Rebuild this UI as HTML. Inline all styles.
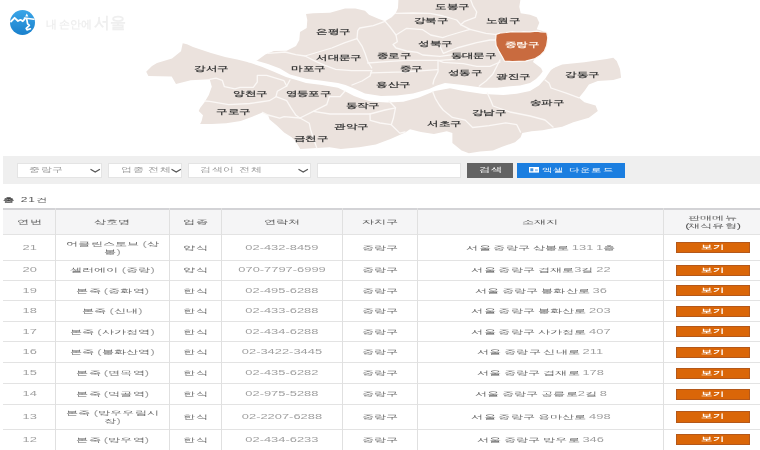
<!DOCTYPE html>
<html><head><meta charset="utf-8">
<style>
html,body{margin:0;padding:0;background:#fff;}
body{width:760px;height:450px;overflow:hidden;position:relative;font-family:"Liberation Sans",sans-serif;filter:blur(0.35px);}
.map{position:absolute;left:0;top:0;}
.map text{font-family:"Liberation Sans",sans-serif;font-size:7.2px;text-anchor:middle;dominant-baseline:central;letter-spacing:0.3px;font-weight:bold;}
.logo{position:absolute;left:9.8px;top:9.7px;width:25px;height:25px;border-radius:50%;background:linear-gradient(#3aa6e8,#1a80cc);}
.logotxt{position:absolute;left:46px;top:12px;height:22px;line-height:22px;font-weight:bold;color:#efefef;white-space:nowrap;}
.bar{position:absolute;left:3px;top:156px;width:757px;height:27.5px;background:#efefef;}
.sel{position:absolute;top:163px;height:14.5px;box-sizing:border-box;border:1px solid #e4e4e4;background:#fff;font-size:7px;color:#999;}
.sel span{position:absolute;top:-1px;line-height:14.5px;color:#9a9a9a;}
.chev{position:absolute;top:3.8px;margin-left:-1px;}
.b1{position:absolute;top:163px;height:14.7px;color:#fff;text-align:center;line-height:14.7px;font-size:7px;}
.total{position:absolute;left:3px;top:194px;height:12px;line-height:12px;color:#555;font-size:7.5px;}
.hbg{position:absolute;background:#f5f5f6;}
.hl{position:absolute;height:1px;background:#e3e3e3;}
.hl.top{height:2px;background:#d3d3d6;}
.vl{position:absolute;width:1px;background:#e0e0e0;}
.td,.th{position:absolute;display:flex;align-items:center;justify-content:center;text-align:center;font-size:7px;line-height:8.5px;}
.td span,.th span{display:inline-block;font-size:7.5px;letter-spacing:0px;color:#7c7c7c;line-height:9.4px;transform:translate(0.6px,0.7px) scale(1.55,0.85);}
.tx{display:inline-block;transform:scaleX(1.6);transform-origin:0 50%;font-size:7px;letter-spacing:0.5px;}
.th span{color:#555;font-weight:normal;letter-spacing:-0.9px;transform:translate(0.6px,-0.4px) scale(1.72,0.85);}
.td span{font-weight:normal;color:#666;letter-spacing:-0.9px;word-spacing:0.6px;transform:translate(0.6px,0.7px) scale(1.72,0.85);}
.addr span{word-spacing:0.3px;}
.td i{font-style:normal;font-weight:normal;color:#a0a0a0;letter-spacing:0px;}
.btn{position:absolute;width:74px;height:11.4px;box-sizing:border-box;border:1px solid #b4581a;background:#da6608;color:#fff;text-align:center;line-height:9.4px;font-size:7px;}
.btn span{display:inline-block;transform:translate(-1px,-0.3px) scale(1.6,0.85);font-size:7px;font-weight:bold;letter-spacing:0.5px;}
</style></head><body>
<svg class="map" width="760" height="156" viewBox="0 0 760 156">
<polygon points="146.2,71.8 152,66 157,62.9 172,58.4 181,51.3 182.7,43.3 187,44.2 193,46.9 211,53 225,57 237.2,59.4 249.4,62.5 256.8,60.7 265.3,54.6 273.9,50.9 286.7,50.7 296,46 299.3,40 300,32 306.7,28 307.3,20 306,14 313.3,13.3 330,12.7 345,8.4 355.4,8.4 365,10.7 369,14.7 378.3,18.7 385,21.3 391.7,17.3 395.7,13.3 398,8 398.5,-2 520.7,-2 519.3,6.7 520.7,13.3 530,14.7 536.7,17.3 539.3,22.7 536.7,29.3 546.7,32.2 547.8,37.8 546.7,45.6 544.4,51.1 540,55.6 534.4,58.9 533,62 541,68 543.5,73 547,72 551.1,68.9 562.2,64.4 584.4,62.2 606.7,58.9 613.3,57.8 616.7,61.1 620,68.9 621.1,77.8 613.3,80 597.8,81.1 588.9,84.4 584.4,91.1 578.9,97.8 584.4,102.2 595.6,105.6 597.8,111.1 588.9,117.8 573.3,122.2 562.2,126.7 548.9,128.9 542.6,130.3 531.5,131.2 522.3,133 520.5,137.6 515,142.2 502.1,146.8 492.9,150.5 480,151.4 468.9,153.3 461.6,150.5 452.4,143.1 452.4,133 446.8,131.2 433.9,133.9 421,132.1 410,129.3 405.2,132.5 390.5,139 375.8,144.5 359.2,147.2 340.8,149.1 329.7,147.2 316.8,148.1 300.3,149.1 295.6,141.3 291.3,137 284.1,132.6 276.8,125.4 269.6,119.6 268.1,115.3 262.4,112.4 252.2,116.7 240.7,121 226.2,123.2 211.7,123.9 200.1,123.9 201.6,121 203,115.3 198.7,110.9 200.1,108 204.5,102.2 208.8,95 211.8,86.7 209.7,79.3 190.7,80.3 176,84 171.7,76.5 148.4,76.1" fill="#ebe2dd"/>
<polygon points="252,61.2 256.8,60.7 268,64 280,68.5 290,74.5 306,78.7 322,80.8 338,82.9 345.5,85 354,88.5 365,93.5 381,96 397,95.6 413,93.5 429,89 437,85.5 445,83 463,85 483,87.7 497,87.7 510,86.3 520,85.5 530,83 536,79 540,75 543,71 547,66 552,60 562,60 556,66.4 551,70 547.5,75 545.5,78.2 539,85.5 530,91 516.7,93.8 503.3,95 483.3,94 463.3,91 450,88.2 434.8,91 419,97.6 403.2,101.8 387.4,102.6 371,101.5 363.7,99.5 354,96 345.5,91.5 338,87.8 322,85.1 306,82.9 298,80.5 286,77 273.9,71.7 261.7,66.8 249.4,62.5 246,61.8" fill="#ffffff"/>
<polyline points="209.7,79.3 216,78.2 222.3,80.3 224.4,86.7 235,88.8 240,87.3 253.3,87.3 257.3,82 257.3,75.3 266.7,75.3 284,80.7 286.7,86" fill="none" stroke="#fbf8f6" stroke-width="1.3" stroke-linejoin="round" stroke-linecap="round"/>
<polyline points="286.7,86 290,80" fill="none" stroke="#fbf8f6" stroke-width="1.3" stroke-linejoin="round" stroke-linecap="round"/>
<polyline points="286.7,86 277.3,91.3 276,96.7 269.3,100.7 260,102 249.8,103.5 228.7,104.6 209.7,101.4 205,101" fill="none" stroke="#fbf8f6" stroke-width="1.3" stroke-linejoin="round" stroke-linecap="round"/>
<polyline points="276,96.7 286.7,100.7 290.7,107.3 296,115.3 300,118 313.3,111.3 326.7,104.7 329.3,96.7 340,96.7 345,91" fill="none" stroke="#fbf8f6" stroke-width="1.3" stroke-linejoin="round" stroke-linecap="round"/>
<polyline points="262.4,112.4 268,115 279.7,118.2 284,116.7 300,118" fill="none" stroke="#fbf8f6" stroke-width="1.3" stroke-linejoin="round" stroke-linecap="round"/>
<polyline points="300,118 309.3,123.3 310.7,130 314,140 316.8,148.1" fill="none" stroke="#fbf8f6" stroke-width="1.3" stroke-linejoin="round" stroke-linecap="round"/>
<polyline points="313.3,111.3 330,114 350,114 370,114 385,110 395.5,107.8" fill="none" stroke="#fbf8f6" stroke-width="1.3" stroke-linejoin="round" stroke-linecap="round"/>
<polyline points="389,101 395.5,107.8 393.4,118.3 391.3,124.7 399.8,133.1 405,132" fill="none" stroke="#fbf8f6" stroke-width="1.3" stroke-linejoin="round" stroke-linecap="round"/>
<polyline points="370,114 370.2,120.4 380,123 391.3,124.7" fill="none" stroke="#fbf8f6" stroke-width="1.3" stroke-linejoin="round" stroke-linecap="round"/>
<polyline points="432.7,91.7 435.3,98.3 439.3,105 443.1,110 452.4,117.4 465.2,120.1 472.6,127.5 489.2,125.7 505.8,122.9 516.8,124.7 520.5,132.1" fill="none" stroke="#fbf8f6" stroke-width="1.3" stroke-linejoin="round" stroke-linecap="round"/>
<polyline points="487.3,93 491,101 493,106 510,112 530,116 545,120 553,127" fill="none" stroke="#fbf8f6" stroke-width="1.3" stroke-linejoin="round" stroke-linecap="round"/>
<polyline points="545,80 549,83 551,88 567,93.3 579,97.8" fill="none" stroke="#fbf8f6" stroke-width="1.3" stroke-linejoin="round" stroke-linecap="round"/>
<polyline points="268,53.3 285,52 295.7,54.7 305,56 318.3,52 331.7,48 345,42.7 357,38.7" fill="none" stroke="#fbf8f6" stroke-width="1.3" stroke-linejoin="round" stroke-linecap="round"/>
<polyline points="357,38.7 357.7,30.7 359.7,28 373.3,25.7 385,21.3" fill="none" stroke="#fbf8f6" stroke-width="1.3" stroke-linejoin="round" stroke-linecap="round"/>
<polyline points="357,38.7 362.3,46.7 365,53.3 367.7,61.3 371.7,68" fill="none" stroke="#fbf8f6" stroke-width="1.3" stroke-linejoin="round" stroke-linecap="round"/>
<polyline points="305,56 315.7,61.3 325,65.3 335.7,69.3 351.7,70.7 371.7,70.7" fill="none" stroke="#fbf8f6" stroke-width="1.3" stroke-linejoin="round" stroke-linecap="round"/>
<polyline points="371.7,70.7 370,76 362,81 352,85" fill="none" stroke="#fbf8f6" stroke-width="1.3" stroke-linejoin="round" stroke-linecap="round"/>
<polyline points="367.7,63 386.7,61.7 406.7,60.3 440,60.3 460,59" fill="none" stroke="#fbf8f6" stroke-width="1.3" stroke-linejoin="round" stroke-linecap="round"/>
<polyline points="370.5,72.8 406,71.8 437.8,69.7" fill="none" stroke="#fbf8f6" stroke-width="1.3" stroke-linejoin="round" stroke-linecap="round"/>
<polyline points="385,21.3 390,27 396,35 397.3,41.7 393,44.5 396,48 406.7,51 417.3,52.3 422.7,55 440,56.3 460,53.7" fill="none" stroke="#fbf8f6" stroke-width="1.3" stroke-linejoin="round" stroke-linecap="round"/>
<polyline points="396,35 406.7,28.3 422.7,29.7 430.7,35 442.7,37.7 447.3,36 460.7,32 470,29.3 486,33.3 496.7,34.7" fill="none" stroke="#fbf8f6" stroke-width="1.3" stroke-linejoin="round" stroke-linecap="round"/>
<polyline points="395.7,13.3 413,13 430,13.3 443.3,16 456.7,20 460.7,24.7 470,29.3" fill="none" stroke="#fbf8f6" stroke-width="1.3" stroke-linejoin="round" stroke-linecap="round"/>
<polyline points="470,-2 472.7,5.3 476.7,12 475.3,17.3 464.7,21.3 460.7,24.7" fill="none" stroke="#fbf8f6" stroke-width="1.3" stroke-linejoin="round" stroke-linecap="round"/>
<polyline points="439.3,45 443.3,53.3 456.7,48 476.7,42.7 490,40 497,40" fill="none" stroke="#fbf8f6" stroke-width="1.3" stroke-linejoin="round" stroke-linecap="round"/>
<polyline points="438,60.3 443.3,62.3 463.3,63.7 476.7,66.3 490,66.3 500,62" fill="none" stroke="#fbf8f6" stroke-width="1.3" stroke-linejoin="round" stroke-linecap="round"/>
<polyline points="438,60.3 438,71.7 434,79.7 433,84" fill="none" stroke="#fbf8f6" stroke-width="1.3" stroke-linejoin="round" stroke-linecap="round"/>
<polyline points="500,60 492.7,74.3 486,81 479.3,86" fill="none" stroke="#fbf8f6" stroke-width="1.3" stroke-linejoin="round" stroke-linecap="round"/>
<polygon points="496.1,34.4 501.1,32.8 506,32.5 512.2,31.7 518,32 523.3,31.7 530,31.9 536.7,31.1 541,31.8 546.7,32.2 547.8,37.8 546.7,45.6 544.4,51.1 540,55.6 534.4,58.9 525.6,61.1 512.2,61.7 504.4,61.1 502.2,56.7 498.9,51.1 496.1,45.6 495.6,40" fill="#c96b3f" stroke="#fdf8f4" stroke-width="1.2" stroke-linejoin="round"/>
<text transform="translate(452.5,6.5) scale(1.56,0.95)" fill="#3a3a3a">도봉구</text>
<text transform="translate(431.1,21) scale(1.56,0.95)" fill="#3a3a3a">강북구</text>
<text transform="translate(503.0,21) scale(1.56,0.95)" fill="#3a3a3a">노원구</text>
<text transform="translate(435.5,44) scale(1.56,0.95)" fill="#3a3a3a">성북구</text>
<text transform="translate(394.0,56) scale(1.56,0.95)" fill="#3a3a3a">종로구</text>
<text transform="translate(473.5,56) scale(1.56,0.95)" fill="#3a3a3a">동대문구</text>
<text transform="translate(411.5,68.6) scale(1.56,0.95)" fill="#3a3a3a">중구</text>
<text transform="translate(465.0,73) scale(1.56,0.95)" fill="#3a3a3a">성동구</text>
<text transform="translate(513.5,76.5) scale(1.56,0.95)" fill="#3a3a3a">광진구</text>
<text transform="translate(393.5,84.5) scale(1.56,0.95)" fill="#3a3a3a">용산구</text>
<text transform="translate(333.2,31.7) scale(1.56,0.95)" fill="#3a3a3a">은평구</text>
<text transform="translate(339.0,58) scale(1.56,0.95)" fill="#3a3a3a">서대문구</text>
<text transform="translate(308.5,68.6) scale(1.56,0.95)" fill="#3a3a3a">마포구</text>
<text transform="translate(211.5,68.7) scale(1.56,0.95)" fill="#3a3a3a">강서구</text>
<text transform="translate(250.2,94.2) scale(1.56,0.95)" fill="#3a3a3a">양천구</text>
<text transform="translate(233.4,112) scale(1.56,0.95)" fill="#3a3a3a">구로구</text>
<text transform="translate(308.2,93.7) scale(1.56,0.95)" fill="#3a3a3a">영등포구</text>
<text transform="translate(362.8,105.7) scale(1.56,0.95)" fill="#3a3a3a">동작구</text>
<text transform="translate(351.2,126.8) scale(1.56,0.95)" fill="#3a3a3a">관악구</text>
<text transform="translate(311.0,138.4) scale(1.56,0.95)" fill="#3a3a3a">금천구</text>
<text transform="translate(444.5,123.8) scale(1.56,0.95)" fill="#3a3a3a">서초구</text>
<text transform="translate(488.9,112.8) scale(1.56,0.95)" fill="#3a3a3a">강남구</text>
<text transform="translate(547.0,102.5) scale(1.56,0.95)" fill="#3a3a3a">송파구</text>
<text transform="translate(582.5,75) scale(1.56,0.95)" fill="#3a3a3a">강동구</text>
<text transform="translate(522.0,44.7) scale(1.56,0.95)" fill="#fff8f0" font-weight="bold">중랑구</text>
</svg>
<div class="logo"></div>
<svg style="position:absolute;left:8px;top:8px" width="30" height="30" viewBox="8 8 30 30"><path d="M11,21.5 L14.6,17.8 L18,21 L20.5,19.8 L22.8,21.2 L25,18.6" fill="none" stroke="#fff" stroke-width="1.8" stroke-linejoin="round" stroke-linecap="round"/><path d="M24.5,18 L33.8,19.3" stroke="#fff" stroke-width="1.6" stroke-linecap="round"/><path d="M26.8,19.3 L27.6,23.8 L29.4,25.3 L26.2,28.3 L27,29.9 L30.4,28.8" fill="none" stroke="#fff" stroke-width="1.7" stroke-linejoin="round" stroke-linecap="round"/><path d="M25.2,16.6 L26.8,13.4 L28.3,16.6 Z" fill="#fff"/></svg>
<div class="logotxt"><span style="font-size:10.5px;letter-spacing:-0.3px">내 손안에</span> <span style="font-size:16px;margin-left:-2px">서울</span></div>
<div class="bar"></div>
<div class="sel" style="left:16.5px;width:85.5px"><span class="tx" style="left:11.6px;transform:scaleX(1.56)">중랑구</span><svg class="chev" style="left:73.3px" width="12" height="6"><polyline points="0.5,1.2 5.2,4 9.9,1.2" fill="none" stroke="#555" stroke-width="1.2"/></svg></div>
<div class="sel" style="left:108px;width:73.5px"><span class="tx" style="left:12px;transform:scaleX(1.56)">업종 전체</span><svg class="chev" style="left:62.8px" width="12" height="6"><polyline points="0.5,1.2 5.2,4 9.9,1.2" fill="none" stroke="#555" stroke-width="1.2"/></svg></div>
<div class="sel" style="left:188px;width:122.5px"><span class="tx" style="left:10.6px;transform:scaleX(1.56)">검색어 전체</span><svg class="chev" style="left:109.9px" width="12" height="6"><polyline points="0.5,1.2 5.2,4 9.9,1.2" fill="none" stroke="#555" stroke-width="1.2"/></svg></div>
<div class="sel" style="left:316.5px;width:144.5px"></div>
<div class="b1" style="left:467px;width:46px;background:#636363"><span class="tx" style="transform-origin:50% 50%">검색</span></div>
<div class="b1" style="left:517px;width:108px;background:#1b7ee0"><svg style="position:absolute;left:11.8px;top:3.7px" width="11" height="7"><rect x="0" y="0" width="10" height="5.6" fill="#fff"/><rect x="1.3" y="1.3" width="3" height="3" fill="#3b8fe0"/><rect x="6" y="2.2" width="2.8" height="2" fill="#9cc6f0"/></svg><span class="tx" style="position:absolute;left:24.7px;top:0;transform:scale(1.52,0.88)">엑셀 다운로드</span></div>
<div class="total"><span class="tx" style="font-size:7.5px;transform:scale(1.6,0.85)"><b style="color:#444">총</b> 21건</span></div>
<div class="hbg" style="left:3px;top:208px;width:757px;height:26.5px"></div>
<div class="hl top" style="left:3px;top:208px;width:757px"></div>
<div class="hl" style="left:3px;top:234.0px;width:757px"></div>
<div class="hl" style="left:3px;top:259.5px;width:757px"></div>
<div class="hl" style="left:3px;top:279.9px;width:757px"></div>
<div class="hl" style="left:3px;top:300.2px;width:757px"></div>
<div class="hl" style="left:3px;top:320.5px;width:757px"></div>
<div class="hl" style="left:3px;top:341.1px;width:757px"></div>
<div class="hl" style="left:3px;top:362.0px;width:757px"></div>
<div class="hl" style="left:3px;top:383.0px;width:757px"></div>
<div class="hl" style="left:3px;top:404.0px;width:757px"></div>
<div class="hl" style="left:3px;top:428.5px;width:757px"></div>
<div class="vl" style="left:54.5px;top:208px;height:242px"></div>
<div class="vl" style="left:168.5px;top:208px;height:242px"></div>
<div class="vl" style="left:220.5px;top:208px;height:242px"></div>
<div class="vl" style="left:341.5px;top:208px;height:242px"></div>
<div class="vl" style="left:416.5px;top:208px;height:242px"></div>
<div class="vl" style="left:662.5px;top:208px;height:242px"></div>
<div class="th" style="left:3px;top:210px;width:52px;height:24.5px"><span>연번</span></div>
<div class="th" style="left:55px;top:210px;width:114px;height:24.5px"><span>상호명</span></div>
<div class="th" style="left:169px;top:210px;width:52px;height:24.5px"><span>업종</span></div>
<div class="th" style="left:221px;top:210px;width:121px;height:24.5px"><span>연락처</span></div>
<div class="th" style="left:342px;top:210px;width:75px;height:24.5px"><span>자치구</span></div>
<div class="th" style="left:417px;top:210px;width:246px;height:24.5px"><span>소재지</span></div>
<div class="th" style="left:663px;top:210px;width:97px;height:24.5px"><span>판매메뉴<br>(채식유형)</span></div>
<div class="td" style="left:3px;top:234.5px;width:52px;height:25.5px"><span><i>21</i></span></div>
<div class="td" style="left:55px;top:234.5px;width:114px;height:25.5px"><span>어클린스토브 <i>(</i>상<br>봉<i>)</i></span></div>
<div class="td" style="left:169px;top:234.5px;width:52px;height:25.5px"><span>양식</span></div>
<div class="td" style="left:221px;top:234.5px;width:121px;height:25.5px"><span><i>02-432-8459</i></span></div>
<div class="td" style="left:342px;top:234.5px;width:75px;height:25.5px"><span>중랑구</span></div>
<div class="td addr" style="left:417px;top:234.5px;width:246px;height:25.5px"><span>서울 중랑구 상봉로 <i>131</i> <i>1</i>층</span></div>
<div class="btn" style="left:676px;top:241.8px"><span>보기</span></div>
<div class="td" style="left:3px;top:260px;width:52px;height:20.399999999999977px"><span><i>20</i></span></div>
<div class="td" style="left:55px;top:260px;width:114px;height:20.399999999999977px"><span>셀러에이 <i>(</i>중랑<i>)</i></span></div>
<div class="td" style="left:169px;top:260px;width:52px;height:20.399999999999977px"><span>양식</span></div>
<div class="td" style="left:221px;top:260px;width:121px;height:20.399999999999977px"><span><i>070-7797-6999</i></span></div>
<div class="td" style="left:342px;top:260px;width:75px;height:20.399999999999977px"><span>중랑구</span></div>
<div class="td addr" style="left:417px;top:260px;width:246px;height:20.399999999999977px"><span>서울 중랑구 겸재로<i>3</i>길 <i>22</i></span></div>
<div class="btn" style="left:676px;top:264.8px"><span>보기</span></div>
<div class="td" style="left:3px;top:280.4px;width:52px;height:20.30000000000001px"><span><i>19</i></span></div>
<div class="td" style="left:55px;top:280.4px;width:114px;height:20.30000000000001px"><span>본죽 <i>(</i>중화역<i>)</i></span></div>
<div class="td" style="left:169px;top:280.4px;width:52px;height:20.30000000000001px"><span>한식</span></div>
<div class="td" style="left:221px;top:280.4px;width:121px;height:20.30000000000001px"><span><i>02-495-6288</i></span></div>
<div class="td" style="left:342px;top:280.4px;width:75px;height:20.30000000000001px"><span>중랑구</span></div>
<div class="td addr" style="left:417px;top:280.4px;width:246px;height:20.30000000000001px"><span>서울 중랑구 봉화산로 <i>36</i></span></div>
<div class="btn" style="left:676px;top:285.1px"><span>보기</span></div>
<div class="td" style="left:3px;top:300.7px;width:52px;height:20.30000000000001px"><span><i>18</i></span></div>
<div class="td" style="left:55px;top:300.7px;width:114px;height:20.30000000000001px"><span>본죽 <i>(</i>신내<i>)</i></span></div>
<div class="td" style="left:169px;top:300.7px;width:52px;height:20.30000000000001px"><span>한식</span></div>
<div class="td" style="left:221px;top:300.7px;width:121px;height:20.30000000000001px"><span><i>02-433-6288</i></span></div>
<div class="td" style="left:342px;top:300.7px;width:75px;height:20.30000000000001px"><span>중랑구</span></div>
<div class="td addr" style="left:417px;top:300.7px;width:246px;height:20.30000000000001px"><span>서울 중랑구 봉화산로 <i>203</i></span></div>
<div class="btn" style="left:676px;top:305.5px"><span>보기</span></div>
<div class="td" style="left:3px;top:321px;width:52px;height:20.600000000000023px"><span><i>17</i></span></div>
<div class="td" style="left:55px;top:321px;width:114px;height:20.600000000000023px"><span>본죽 <i>(</i>사가정역<i>)</i></span></div>
<div class="td" style="left:169px;top:321px;width:52px;height:20.600000000000023px"><span>한식</span></div>
<div class="td" style="left:221px;top:321px;width:121px;height:20.600000000000023px"><span><i>02-434-6288</i></span></div>
<div class="td" style="left:342px;top:321px;width:75px;height:20.600000000000023px"><span>중랑구</span></div>
<div class="td addr" style="left:417px;top:321px;width:246px;height:20.600000000000023px"><span>서울 중랑구 사가정로 <i>407</i></span></div>
<div class="btn" style="left:676px;top:325.9px"><span>보기</span></div>
<div class="td" style="left:3px;top:341.6px;width:52px;height:20.899999999999977px"><span><i>16</i></span></div>
<div class="td" style="left:55px;top:341.6px;width:114px;height:20.899999999999977px"><span>본죽 <i>(</i>봉화산역<i>)</i></span></div>
<div class="td" style="left:169px;top:341.6px;width:52px;height:20.899999999999977px"><span>한식</span></div>
<div class="td" style="left:221px;top:341.6px;width:121px;height:20.899999999999977px"><span><i>02-3422-3445</i></span></div>
<div class="td" style="left:342px;top:341.6px;width:75px;height:20.899999999999977px"><span>중랑구</span></div>
<div class="td addr" style="left:417px;top:341.6px;width:246px;height:20.899999999999977px"><span>서울 중랑구 신내로 <i>211</i></span></div>
<div class="btn" style="left:676px;top:346.7px"><span>보기</span></div>
<div class="td" style="left:3px;top:362.5px;width:52px;height:21.0px"><span><i>15</i></span></div>
<div class="td" style="left:55px;top:362.5px;width:114px;height:21.0px"><span>본죽 <i>(</i>면목역<i>)</i></span></div>
<div class="td" style="left:169px;top:362.5px;width:52px;height:21.0px"><span>한식</span></div>
<div class="td" style="left:221px;top:362.5px;width:121px;height:21.0px"><span><i>02-435-6282</i></span></div>
<div class="td" style="left:342px;top:362.5px;width:75px;height:21.0px"><span>중랑구</span></div>
<div class="td addr" style="left:417px;top:362.5px;width:246px;height:21.0px"><span>서울 중랑구 겸재로 <i>178</i></span></div>
<div class="btn" style="left:676px;top:367.6px"><span>보기</span></div>
<div class="td" style="left:3px;top:383.5px;width:52px;height:21.0px"><span><i>14</i></span></div>
<div class="td" style="left:55px;top:383.5px;width:114px;height:21.0px"><span>본죽 <i>(</i>먹골역<i>)</i></span></div>
<div class="td" style="left:169px;top:383.5px;width:52px;height:21.0px"><span>한식</span></div>
<div class="td" style="left:221px;top:383.5px;width:121px;height:21.0px"><span><i>02-975-5288</i></span></div>
<div class="td" style="left:342px;top:383.5px;width:75px;height:21.0px"><span>중랑구</span></div>
<div class="td addr" style="left:417px;top:383.5px;width:246px;height:21.0px"><span>서울 중랑구 공릉로<i>2</i>길 <i>8</i></span></div>
<div class="btn" style="left:676px;top:388.6px"><span>보기</span></div>
<div class="td" style="left:3px;top:404.5px;width:52px;height:24.5px"><span><i>13</i></span></div>
<div class="td" style="left:55px;top:404.5px;width:114px;height:24.5px"><span>본죽 <i>(</i>망우우림시<br>장<i>)</i></span></div>
<div class="td" style="left:169px;top:404.5px;width:52px;height:24.5px"><span>한식</span></div>
<div class="td" style="left:221px;top:404.5px;width:121px;height:24.5px"><span><i>02-2207-6288</i></span></div>
<div class="td" style="left:342px;top:404.5px;width:75px;height:24.5px"><span>중랑구</span></div>
<div class="td addr" style="left:417px;top:404.5px;width:246px;height:24.5px"><span>서울 중랑구 용마산로 <i>498</i></span></div>
<div class="btn" style="left:676px;top:411.4px"><span>보기</span></div>
<div class="td" style="left:3px;top:429px;width:52px;height:21px"><span><i>12</i></span></div>
<div class="td" style="left:55px;top:429px;width:114px;height:21px"><span>본죽 <i>(</i>망우역<i>)</i></span></div>
<div class="td" style="left:169px;top:429px;width:52px;height:21px"><span>한식</span></div>
<div class="td" style="left:221px;top:429px;width:121px;height:21px"><span><i>02-434-6233</i></span></div>
<div class="td" style="left:342px;top:429px;width:75px;height:21px"><span>중랑구</span></div>
<div class="td addr" style="left:417px;top:429px;width:246px;height:21px"><span>서울 중랑구 망우로 <i>346</i></span></div>
<div class="btn" style="left:676px;top:434.1px"><span>보기</span></div>
</body></html>
